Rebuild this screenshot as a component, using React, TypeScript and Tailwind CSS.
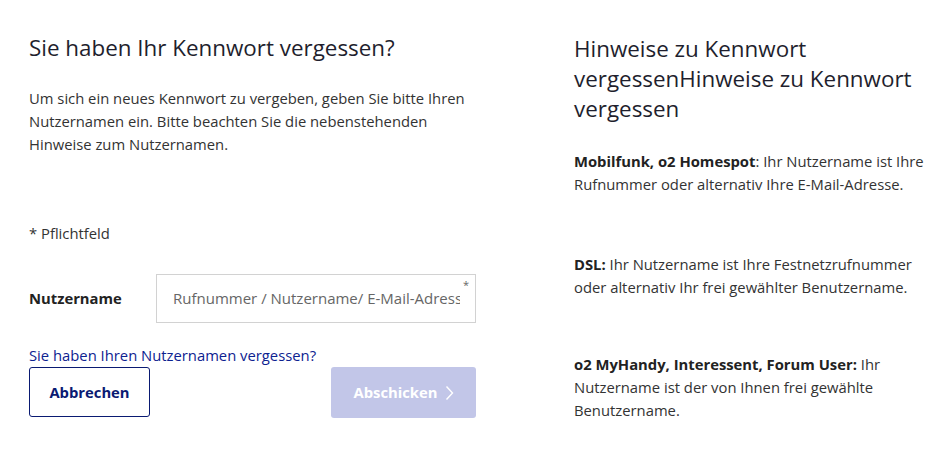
import React from "react";

export default function App() {
  return (
    <div
      className="w-[941px] h-[449px] bg-white overflow-hidden flex text-[#333333]"
      style={{ fontFamily: '"Open Sans", "Noto Sans", sans-serif' }}
    >
      <div className="ml-[29px] w-[447px] shrink-0 pt-[33px] flex flex-col">
        <h1 className="text-[22.4px] leading-[30px] text-[#1f1f2e] font-normal">
          Sie haben Ihr Kennwort vergessen?
        </h1>
        <p className="mt-[24px] text-[14.8px] leading-[23px] w-[445px]">
          Um sich ein neues Kennwort zu vergeben, geben Sie bitte Ihren Nutzernamen ein. Bitte beachten Sie die nebenstehenden Hinweise zum Nutzernamen.
        </p>
        <p className="mt-[66px] text-[14.8px] leading-[23px]">* Pflichtfeld</p>
        <div className="mt-[29px] flex items-center">
          <label className="w-[127px] shrink-0 text-[14.8px] font-bold text-[#222]">Nutzername</label>
          <div className="relative flex-1 min-w-0 h-[49px] border border-[#d2d2d2] flex items-center pl-[16px] pr-[15px]">
            <span className="block text-[15px] text-[#666] whitespace-nowrap overflow-hidden">
              Rufnummer / Nutzername/ E-Mail-Adresse
            </span>
            <span className="absolute right-[6px] top-[2px] text-[11px] text-[#666]">*</span>
          </div>
        </div>
        <a className="mt-[21px] text-[14.8px] leading-[23px] text-[#0d2290]">
          Sie haben Ihren Nutzernamen vergessen?
        </a>
        <div className="flex justify-between">
          <button className="w-[121px] h-[50px] border border-[#0a1a72] rounded-[3px] text-[14.8px] font-bold text-[#0a1a72]">
            Abbrechen
          </button>
          <button className="w-[145px] h-[51px] bg-[#c2c6e8] rounded-[3px] text-[14.8px] font-bold text-white flex items-center justify-center gap-[7px]">
            Abschicken
            <svg width="9" height="16" viewBox="0 0 9 16" fill="none">
              <path d="M1.5 1.5 L7.5 8 L1.5 14.5" stroke="white" strokeWidth="1.4" />
            </svg>
          </button>
        </div>
      </div>
      <div className="ml-[98px] w-[360px] shrink-0 pt-[34px] flex flex-col">
        <h2 className="text-[22.4px] leading-[30px] text-[#1f1f2e] font-normal">
          Hinweise zu Kennwort vergessenHinweise zu Kennwort vergessen
        </h2>
        <p className="mt-[26px] text-[14.8px] leading-[23px]">
          <b className="text-[#222]">Mobilfunk, o2 Homespot</b>: Ihr Nutzername ist Ihre Rufnummer oder alternativ Ihre E-Mail-Adresse.
        </p>
        <p className="mt-[57px] text-[14.8px] leading-[23px]">
          <b className="text-[#222]">DSL:</b> Ihr Nutzername ist Ihre Festnetzrufnummer oder alternativ Ihr frei gewählter Benutzername.
        </p>
        <p className="mt-[54px] text-[14.8px] leading-[23px]">
          <b className="text-[#222]">o2 MyHandy, Interessent, Forum User:</b> Ihr Nutzername ist der von Ihnen frei gewählte Benutzername.
        </p>
      </div>
    </div>
  );
}
